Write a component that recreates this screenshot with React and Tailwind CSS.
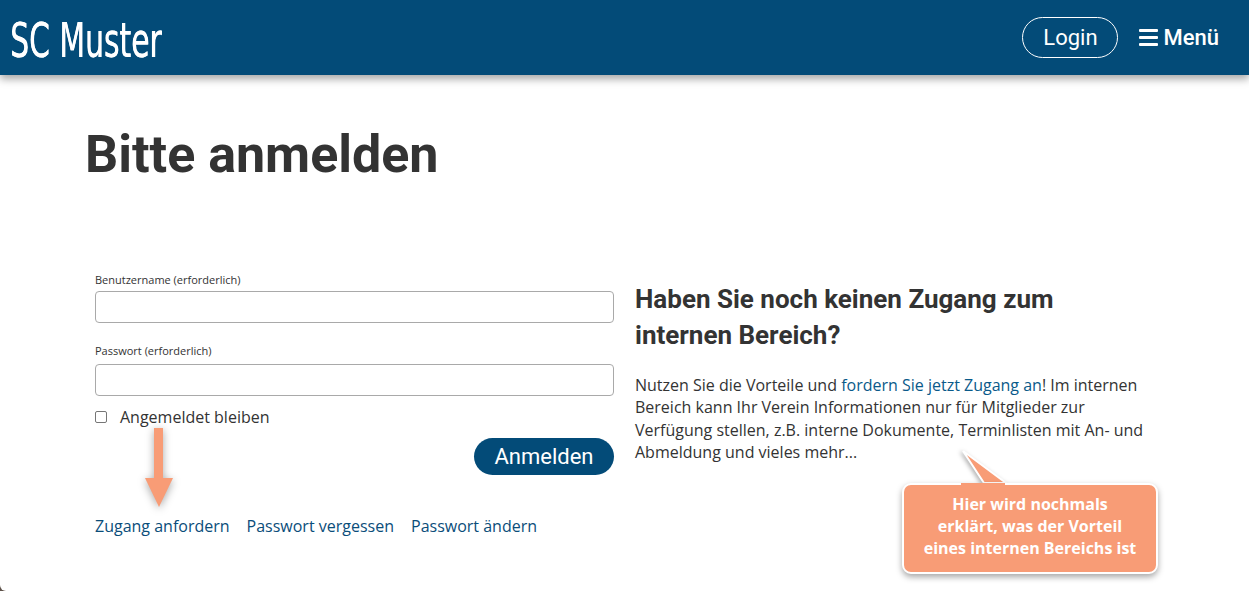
import React from "react";

export default function App() {
  const roboto = { fontFamily: "Roboto, 'Liberation Sans', sans-serif" };
  const open = { fontFamily: "'Open Sans', 'Liberation Sans', sans-serif" };
  return (
    <div className="w-[1249px] h-[591px] bg-[#5e524a] overflow-hidden">
      <div className="relative w-full h-full bg-white rounded-bl-[6px] overflow-hidden">
        <header className="relative z-10 h-[75px] bg-[#034b78] flex items-center justify-between pl-[10px] pr-[30px] shadow-[0_4px_8px_rgba(0,0,0,0.35)]">
          <div
            className="text-white text-[48px] leading-none scale-x-[0.69] origin-left mt-[4px] [text-shadow:0.6px_0_0_white]"
            style={{ fontFamily: "'DejaVu Sans Condensed', 'Liberation Sans Narrow', sans-serif" }}
          >
            SC Muster
          </div>
          <div className="flex items-center" style={roboto}>
            <button className="h-[41px] w-[96px] rounded-full border border-white text-white text-[22px] leading-none flex items-center justify-center mr-[21px]">
              Login
            </button>
            <div className="flex items-center text-white text-[22px] font-medium leading-none">
              <svg width="19" height="17" viewBox="0 0 19 17" className="mr-[5px]">
                <rect x="0" y="0" width="19" height="3" rx="1" fill="white" />
                <rect x="0" y="7" width="19" height="3" rx="1" fill="white" />
                <rect x="0" y="14" width="19" height="3" rx="1" fill="white" />
              </svg>
              Menü
            </div>
          </div>
        </header>

        <main className="pl-[85px]">
          <h1 className="pt-[45px] text-[52px] font-bold text-[#333333] leading-[70px]" style={roboto}>
            Bitte anmelden
          </h1>

          <div className="flex mt-[82px] pl-[10px]">
            <div className="w-[519px] flex flex-col" style={open}>
              <label className="text-[11px] text-[#333] leading-[15px]">Benutzername (erforderlich)</label>
              <input className="mt-[4px] h-[32px] w-full rounded-[4px] border border-[#a9a9a9]" />
              <label className="mt-[20px] text-[11px] text-[#333] leading-[15px]">Passwort (erforderlich)</label>
              <input className="mt-[6px] h-[32px] w-full rounded-[4px] border border-[#a9a9a9]" type="password" />
              <div className="mt-[10px] flex items-center h-[22px]">
                <span className="w-[12px] h-[12px] border border-[#767676] rounded-[2px] bg-white"></span>
                <span className="ml-[13px] text-[16px] text-[#333] leading-[22px]">Angemeldet bleiben</span>
              </div>
              <div className="relative flex justify-end mt-[10px]">
                <button
                  className="h-[37px] w-[140px] rounded-full bg-[#034b78] text-white text-[22px] leading-none flex items-center justify-center"
                  style={roboto}
                >
                  Anmelden
                </button>
                <svg
                  className="absolute left-[49px] -top-[10px] drop-shadow-[0_2px_4px_rgba(0,0,0,0.35)]"
                  width="30"
                  height="80"
                  viewBox="0 0 30 80"
                >
                  <rect x="10" y="0" width="9" height="51" fill="#f89c76" />
                  <polygon points="1,50 29,50 15,79" fill="#f89c76" />
                </svg>
              </div>
              <div className="mt-[40px] flex text-[16px] text-[#0a4d7a] leading-[22px]">
                <span>Zugang anfordern</span>
                <span className="ml-[17px]">Passwort vergessen</span>
                <span className="ml-[17px]">Passwort ändern</span>
              </div>
            </div>

            <div className="ml-[21px] w-[520px] pt-[9px]">
              <h2 className="text-[26px] font-bold text-[#333] leading-[36px]" style={roboto}>
                Haben Sie noch keinen Zugang zum
                <br />
                internen Bereich?
              </h2>
              <p className="mt-[21px] text-[16px] leading-[22.4px] text-[#333] w-[520px]" style={open}>
                Nutzen Sie die Vorteile und <span className="text-[#0a5a8a]">fordern Sie jetzt Zugang an</span>! Im internen Bereich kann Ihr Verein Informationen nur für Mitglieder zur Verfügung stellen, z.B. interne Dokumente, Terminlisten mit An- und Abmeldung und vieles mehr...
              </p>
            </div>
          </div>
        </main>

        <div className="absolute left-[902px] top-[483px] w-[256px] h-[91px]">
          <svg
            className="absolute left-[58px] -top-[33px] drop-shadow-[-2px_1px_2px_rgba(0,0,0,0.3)]"
            width="50"
            height="40"
            viewBox="0 0 50 40"
          >
            <polygon points="3,1 24,33 46,33" fill="#f89c76" stroke="white" strokeWidth="2" />
          </svg>
          <div
            className="relative w-full h-full rounded-[9px] bg-[#f89c76] border-2 border-white shadow-[0_3px_6px_rgba(0,0,0,0.35)] flex items-center justify-center text-center text-white font-bold text-[16px] leading-[22px] pb-[5px]"
            style={open}
          >
            Hier wird nochmals
            <br />
            erklärt, was der Vorteil
            <br />
            eines internen Bereichs ist
          </div>
          <div className="absolute left-[59px] top-0 w-[44px] h-[3px] bg-[#f89c76]"></div>
        </div>
      </div>
    </div>
  );
}
